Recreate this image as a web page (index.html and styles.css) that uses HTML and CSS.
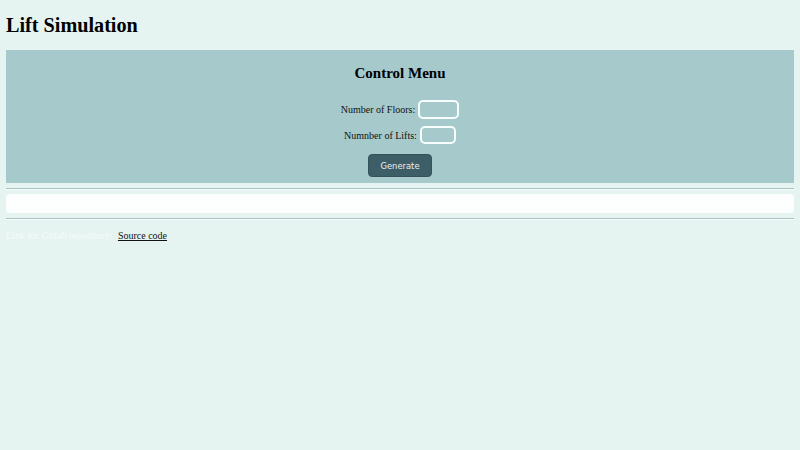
FILE: index.html
```html
<!DOCTYPE html>
<html>
<head>
<meta charset="utf-8">
<title>Lift Simulation</title>
<link rel="stylesheet" href="styles.css">
</head>
<body>
<h1 class="title">Lift Simulation</h1>
<section class="panel">
  <h2 class="panel-title">Control Menu</h2>
  <div class="row row-floors">
    <label class="label" for="floors">Number of Floors:</label>
    <input class="field field-floors" id="floors" type="text">
  </div>
  <div class="row row-lifts">
    <label class="label" for="lifts">Numnber of Lifts:</label>
    <input class="field field-lifts" id="lifts" type="text">
  </div>
  <div class="row row-btn">
    <button class="btn" type="button">Generate</button>
  </div>
</section>
<hr class="rule">
<div class="output"></div>
<hr class="rule">
<p class="footer"><span class="footer-text">Link for Gitlab repository:</span> <a class="footer-link" href="#">Source code</a></p>
</body>
</html>
```
FILE: styles.css
```css
html, body {
  background: #e6f4f1;
}
body {
  margin: 0;
  padding: 0 6px;
  font-family: "Liberation Serif", "Times New Roman", serif;
  font-size: 10px;
  color: #000;
}
.title {
  margin: 0;
  padding: 14px 0 13px;
  font-size: 20.2px;
  line-height: 23px;
  font-weight: bold;
}
.panel {
  background: #a6c9cb;
  padding: 15px 0 6px;
  text-align: center;
}
.panel-title {
  margin: 0 0 18px;
  font-size: 15px;
  line-height: 17px;
  font-weight: bold;
}
.row {
  display: flex;
  justify-content: center;
  align-items: center;
  gap: 3px;
}
.row-lifts {
  margin-top: 7px;
}
.row-btn {
  margin-top: 10px;
}
.label {
  font-size: 10px;
  line-height: 12px;
  padding-top: 1px;
  color: #111;
}
.field {
  box-sizing: border-box;
  background: transparent;
  border: 2px solid #f7fcfc;
  border-radius: 5px;
  height: 19px;
  padding: 0;
  margin: 0;
  outline: none;
}
.field-floors {
  width: 41px;
}
.field-lifts {
  width: 36px;
  height: 18px;
}
.btn {
  box-sizing: border-box;
  width: 64px;
  height: 23px;
  background: #3e5e67;
  color: #e8f0f0;
  border: 1px solid #36535b;
  border-radius: 4px;
  font-family: "DejaVu Sans", sans-serif;
  font-size: 8.4px;
  padding: 0;
}
.rule {
  margin: 5px 0 0;
  height: 0;
  border: 0;
  border-top: 1px solid #a9c4c4;
  border-bottom: 1px solid #f4fbfa;
}
.output {
  margin-top: 4px;
  height: 19px;
  background: #fdfefe;
  border-radius: 4px;
}
.footer {
  margin: 10px 0 0;
  line-height: 12px;
}
.footer-text {
  color: #f4fbfa;
}
.footer-link {
  margin-left: 3px;
  color: #111;
  text-decoration: underline;
}
```
